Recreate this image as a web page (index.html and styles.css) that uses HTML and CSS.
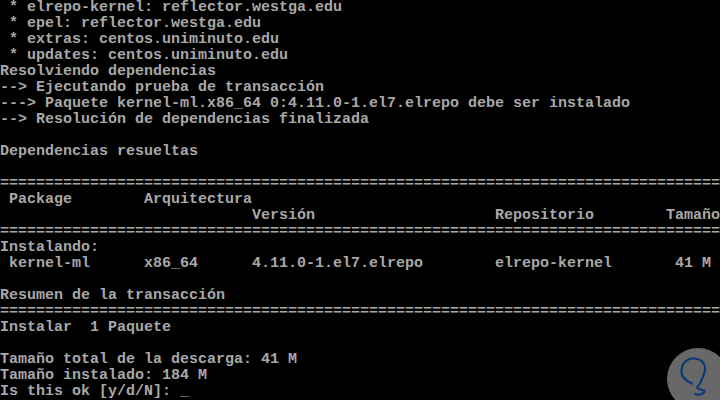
FILE: index.html
```html
<!DOCTYPE html>
<html lang="es">
<head>
    <meta charset="UTF-8">
    <meta name="viewport" content="width=device-width, initial-scale=1.0">
    <title>Consola - yum install kernel-ml</title>
    <link rel="stylesheet" href="styles.css">
</head>
<body>
    <div class="screen">
<pre class="console"> * elrepo-kernel: reflector.westga.edu
 * epel: reflector.westga.edu
 * extras: centos.uniminuto.edu
 * updates: centos.uniminuto.edu
Resolviendo dependencias
--&gt; Ejecutando prueba de transacción
---&gt; Paquete kernel-ml.x86_64 0:4.11.0-1.el7.elrepo debe ser instalado
--&gt; Resolución de dependencias finalizada

Dependencias resueltas

================================================================================
 Package        Arquitectura
                            Versión                    Repositorio        Tamaño
================================================================================
Instalando:
 kernel-ml      x86_64      4.11.0-1.el7.elrepo        elrepo-kernel       41 M

Resumen de la transacción
================================================================================
Instalar  1 Paquete

Tamaño total de la descarga: 41 M
Tamaño instalado: 184 M
Is this ok [y/d/N]: _</pre>

        <!-- marca de agua -->
        <div class="watermark">
            <svg width="64" height="64" viewBox="0 0 64 64">
                <circle cx="32" cy="32" r="31" fill="#686868"/>
                <path d="M26 36.5 C20 34 15 30 15.5 23.5 C16 15 22 11 28.5 11.5 C35 12 39.5 16 39 23 C38.5 28 36 31 34.5 35.5 C33.5 38.5 29.5 40 32 41.5 C35 43 40 43 38 45.5 C36 48 31 47.5 29 47"
                      fill="none" stroke="#0b3a78" stroke-width="2.2" stroke-linecap="round" stroke-linejoin="round"/>
            </svg>
        </div>
    </div>
</body>
</html>
```

FILE: styles.css
```css
:root {
    --bg-color: #000000;
    --text-color: #a8a8a8;
}

html, body {
    margin: 0;
    padding: 0;
    background: var(--bg-color);
}

.screen {
    position: relative;
    width: 720px;
    height: 400px;
    overflow: hidden;
    background: var(--bg-color);
}

.console {
    margin: 0;
    font-family: 'Liberation Mono', 'DejaVu Sans Mono', monospace;
    font-size: 15px;
    font-weight: bold;
    line-height: 16px;
    color: var(--text-color);
    white-space: pre;
}

.watermark {
    position: absolute;
    left: 666px;
    top: 347px;
    width: 64px;
    height: 64px;
}

.watermark svg {
    display: block;
}
```
